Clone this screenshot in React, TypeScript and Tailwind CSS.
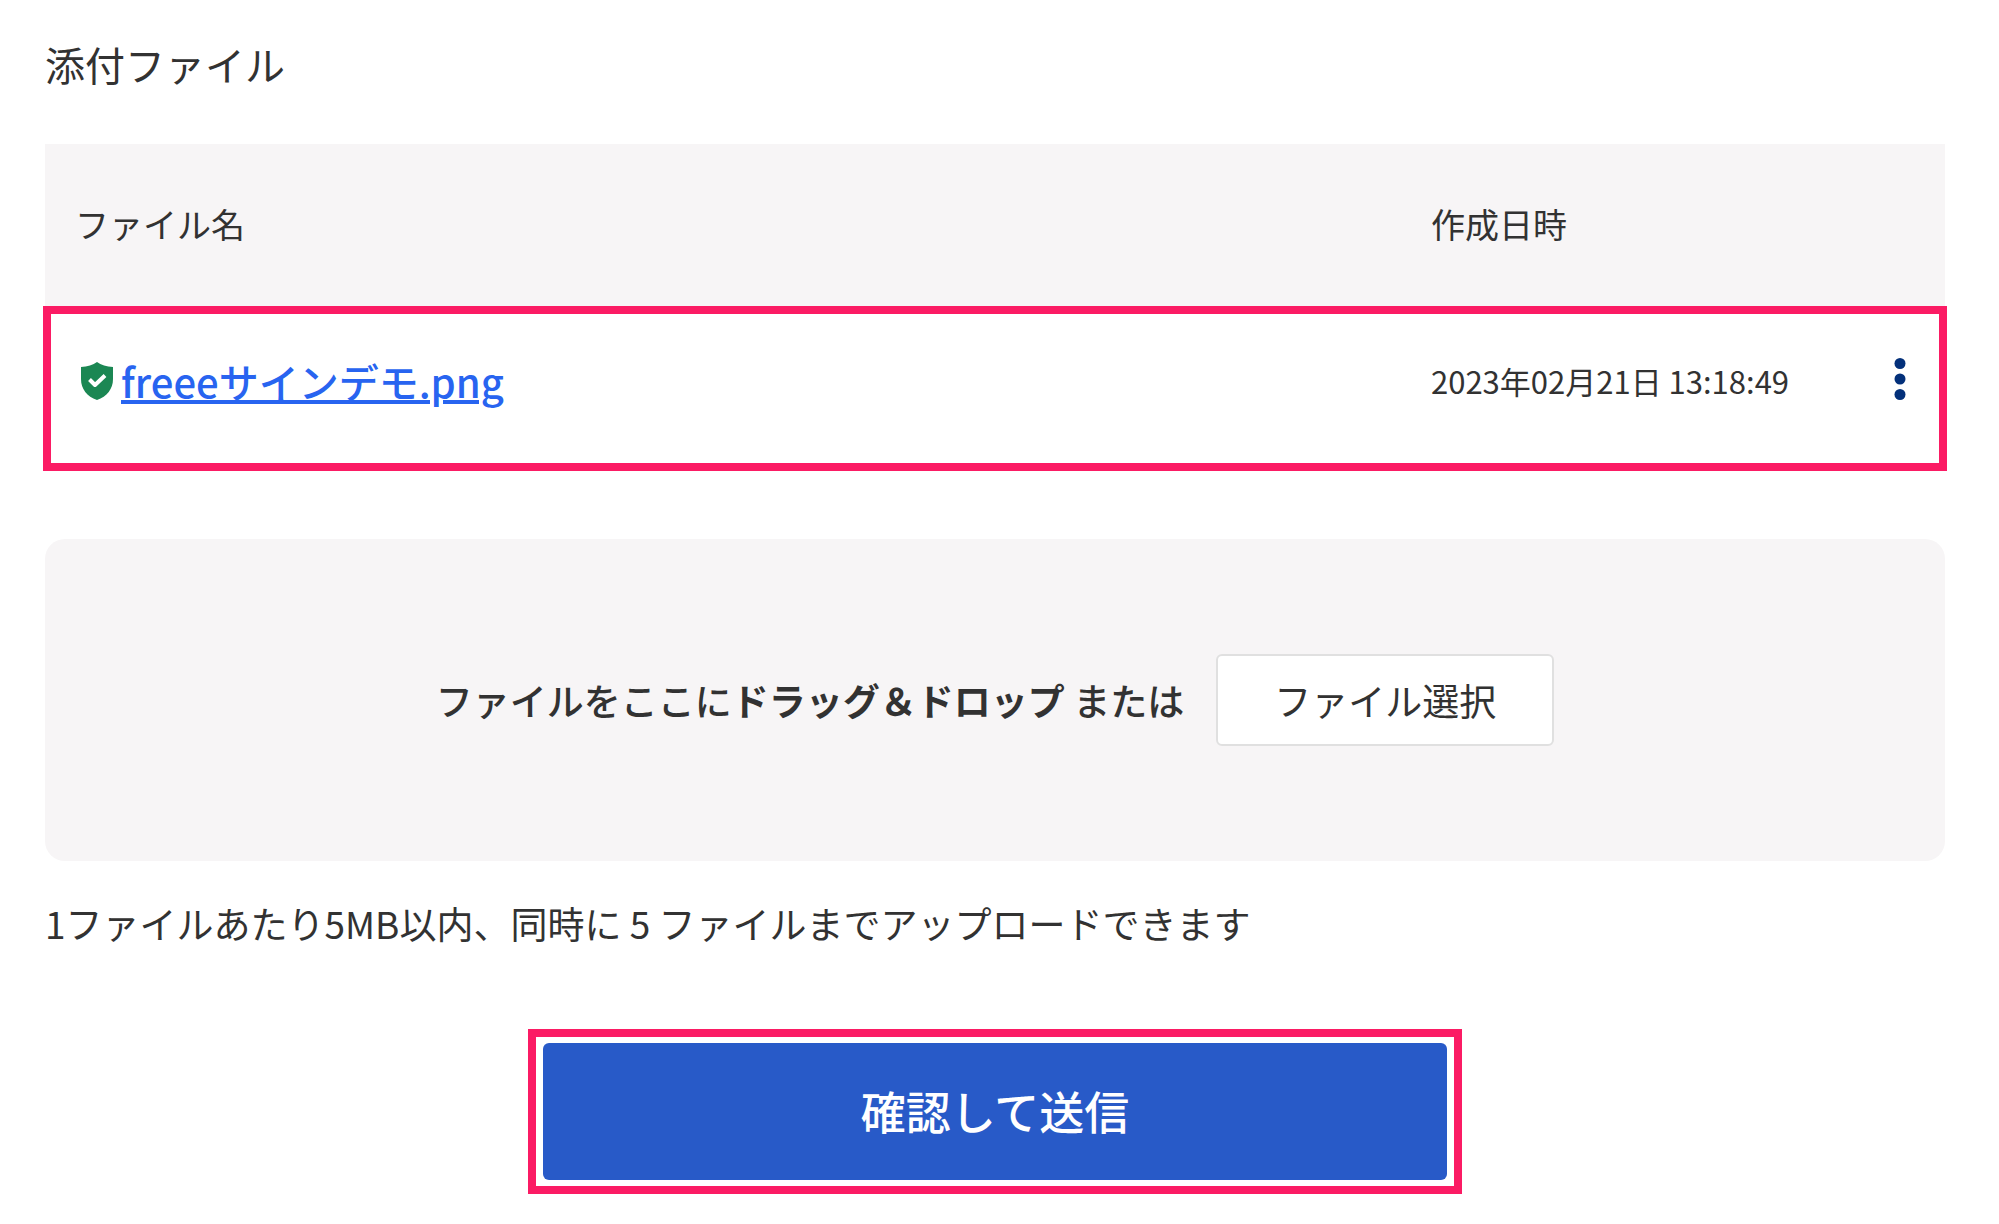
import React, { useRef } from 'react';

interface AttachedFile {
  id: number;
  name: string;
  createdAt: string;
}

const FILES: AttachedFile[] = [
  { id: 1, name: 'freeeサインデモ.png', createdAt: '2023年02月21日 13:18:49' },
];

const ShieldCheck: React.FC = () => (
  <svg viewBox="0 0 32 38" className="w-8 h-[38px] shrink-0" aria-hidden="true">
    <path
      d="M16 0C12 3 6.500 4.800 0 5V17C0 27 6 34.500 16 38C26 34.500 32 27 32 17V5C25.500 4.800 20 3 16 0Z"
      fill="#1b8753"
    />
    <path
      d="M8.500 17.500L14 23L24 13.500"
      fill="none"
      stroke="#fff"
      strokeWidth="4"
      strokeLinejoin="round"
    />
  </svg>
);

const MoreDots: React.FC = () => (
  <svg viewBox="0 0 12 44" className="w-3 h-11" aria-hidden="true">
    <circle cx="6" cy="6.500" r="5.500" fill="#03307a" />
    <circle cx="6" cy="22" r="5.500" fill="#03307a" />
    <circle cx="6" cy="37.500" r="5.500" fill="#03307a" />
  </svg>
);

const FileTable: React.FC<{ files: AttachedFile[] }> = ({ files }) => (
  <table className="w-full table-fixed border-collapse text-left">
    <colgroup>
      <col />
      <col className="w-[424px]" />
      <col className="w-[90px]" />
    </colgroup>
    <thead className="bg-[#f7f5f6]">
      <tr className="h-[164px] text-[34px]">
        <th scope="col" className="pl-[30px] pb-1 font-normal">ファイル名</th>
        <th scope="col" className="pb-1 font-normal">作成日時</th>
        <td />
      </tr>
    </thead>
    <tbody>
      {files.map((file) => (
        <tr
          key={file.id}
          className="h-[161px] outline-8 -outline-offset-6 outline-[#fb1b64]"
        >
          <td className="pl-9 pb-4">
            <div className="flex items-center gap-2">
              <ShieldCheck />
              <a href="#file" className="text-[40px] font-medium text-[#2864f0] underline">
                {file.name}
              </a>
            </div>
          </td>
          <td className="pb-4 text-[31px]">{file.createdAt}</td>
          <td className="pb-5">
            <button type="button" aria-label="メニュー" className="mx-auto flex">
              <MoreDots />
            </button>
          </td>
        </tr>
      ))}
    </tbody>
  </table>
);

const DropZone: React.FC = () => {
  const inputRef = useRef<HTMLInputElement>(null);

  return (
    <div className="flex items-center justify-center gap-8 rounded-[20px] bg-[#f7f5f6] py-[115px]">
      <p className="text-[37px] font-medium">
        ファイルをここに<strong className="font-bold">ドラッグ＆ドロップ</strong> または
      </p>
      <input ref={inputRef} type="file" multiple hidden aria-label="ファイル選択" />
      <button
        type="button"
        onClick={() => inputRef.current?.click()}
        className="h-[92px] rounded-md border-2 border-[#e0e0e0] bg-white px-14 text-[37px]"
      >
        ファイル選択
      </button>
    </div>
  );
};

export default function App() {
  return (
    <main className="bg-white pt-[34px] pr-[54px] pb-8 pl-[45px] font-['Noto_Sans_CJK_JP',sans-serif] leading-[60px] text-[#323232]">
      <h2 className="mb-[50px] text-[40px] leading-[60px]">添付ファイル</h2>
      <FileTable files={FILES} />
      <div className="mt-[70px]">
        <DropZone />
      </div>
      <p className="mt-8 text-[37px]">
        1ファイルあたり5MB以内、同時に 5 ファイルまでアップロードできます
      </p>
      <div className="mx-auto mt-[76px] w-[934px] border-8 border-[#fb1b64] px-[7px] py-1.5">
        <button
          type="button"
          className="h-[137px] w-full rounded-md bg-[#285ac8] pb-0.5 text-[45px] font-medium text-white"
        >
          確認して送信
        </button>
      </div>
    </main>
  );
}
